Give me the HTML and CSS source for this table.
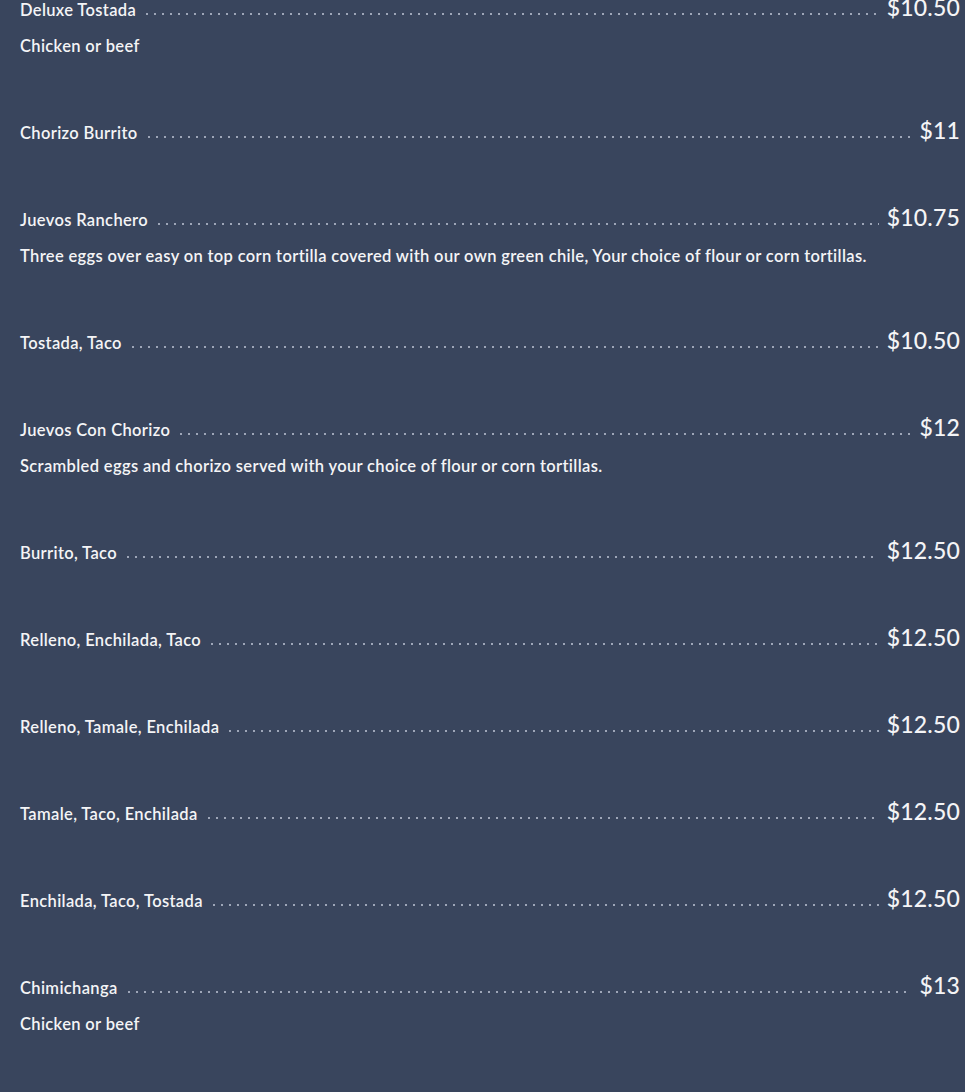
FILE: index.html
```html
<!DOCTYPE html>
<html lang="en">
<head>
  <meta charset="UTF-8" />
  <meta name="viewport" content="width=device-width, initial-scale=1" />
  <title>Menu</title>
  <link rel="stylesheet" href="styles.css">
</head>
<body>
  <div class="menu">
    <div class="item">
      <div class="row"><span class="name">Deluxe Tostada</span><span class="leader"></span><span class="price">$10.50</span></div>
      <p class="desc">Chicken or beef</p>
    </div>
    <div class="item">
      <div class="row"><span class="name">Chorizo Burrito</span><span class="leader"></span><span class="price">$11</span></div>
    </div>
    <div class="item">
      <div class="row"><span class="name">Juevos Ranchero</span><span class="leader"></span><span class="price">$10.75</span></div>
      <p class="desc">Three eggs over easy on top corn tortilla covered with our own green chile, Your choice of flour or corn tortillas.</p>
    </div>
    <div class="item">
      <div class="row"><span class="name">Tostada, Taco</span><span class="leader"></span><span class="price">$10.50</span></div>
    </div>
    <div class="item">
      <div class="row"><span class="name">Juevos Con Chorizo</span><span class="leader"></span><span class="price">$12</span></div>
      <p class="desc">Scrambled eggs and chorizo served with your choice of flour or corn tortillas.</p>
    </div>
    <div class="item">
      <div class="row"><span class="name">Burrito, Taco</span><span class="leader"></span><span class="price">$12.50</span></div>
    </div>
    <div class="item">
      <div class="row"><span class="name">Relleno, Enchilada, Taco</span><span class="leader"></span><span class="price">$12.50</span></div>
    </div>
    <div class="item">
      <div class="row"><span class="name">Relleno, Tamale, Enchilada</span><span class="leader"></span><span class="price">$12.50</span></div>
    </div>
    <div class="item">
      <div class="row"><span class="name">Tamale, Taco, Enchilada</span><span class="leader"></span><span class="price">$12.50</span></div>
    </div>
    <div class="item">
      <div class="row"><span class="name">Enchilada, Taco, Tostada</span><span class="leader"></span><span class="price">$12.50</span></div>
    </div>
    <div class="item">
      <div class="row"><span class="name">Chimichanga</span><span class="leader"></span><span class="price">$13</span></div>
      <p class="desc">Chicken or beef</p>
    </div>
  </div>
</body>
</html>
```

FILE: styles.css
```css
:root {
  --bg: #39455d;
  --text: #f4f4f6;
  --dots: #9ea6b8;
}
* {
  margin: 0;
  padding: 0;
  box-sizing: border-box;
}
body {
  background: var(--bg);
  color: var(--text);
  font-family: Lato, "Noto Sans", sans-serif;
  overflow: hidden;
}
.menu {
  margin-top: -8px;
  padding: 0 5px 0 20px;
}
.item {
  padding-bottom: 57px;
}
.row {
  display: flex;
  align-items: baseline;
  height: 30px;
}
.name {
  font-size: 16.5px;
  font-weight: 600;
  letter-spacing: 0.35px;
  line-height: 24px;
  white-space: nowrap;
}
.leader {
  flex: 1;
  height: 4px;
  margin: 0 8px 0 7px;
  background-image: radial-gradient(circle, var(--dots) 0.8px, transparent 1.2px);
  background-size: 8px 4px;
  background-repeat: repeat-x;
}
.price {
  font-size: 23px;
  font-weight: 500;
  letter-spacing: 0.2px;
  line-height: 30px;
}
.desc {
  font-size: 16.5px;
  font-weight: 600;
  letter-spacing: 0.35px;
  line-height: 24px;
  margin-top: 12px;
}
```
